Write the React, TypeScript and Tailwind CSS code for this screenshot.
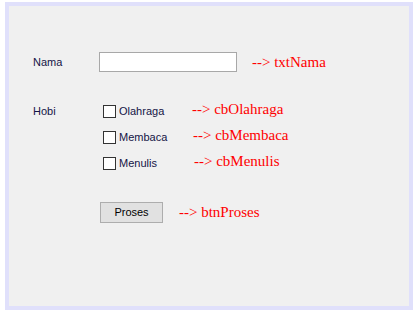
const ui = "font-['Liberation_Sans',Arial,sans-serif] text-[11px] text-[#141446]";
const note = "font-['Liberation_Serif','Times_New_Roman',serif] text-[15px] leading-none text-[#ff0000] whitespace-nowrap";

const hobbies = [
  { label: "Olahraga", name: "cbOlahraga", w: "w-[73px]" },
  { label: "Membaca", name: "cbMembaca", w: "w-[74px]" },
  { label: "Menulis", name: "cbMenulis", w: "w-[75px]" },
];

export default function App() {
  return (
    <div className="w-[417px] h-[314px] bg-white pt-[2px] pl-[5px]">
      <div className="w-[408px] h-[308px] border-4 border-[#e0e0fb] bg-[#f0f0f0] pl-[24px] pt-[46px]">
        {/* Nama */}
        <div className="flex items-center h-[20px]">
          <span className={`${ui} w-[66px]`}>Nama</span>
          <div className="w-[138px] h-[20px] bg-white border border-[#a8a8a8]" />
          <span className={`${note} ml-[15px]`}>--&gt; txtNama</span>
        </div>

        {/* Hobi */}
        <div className="flex mt-[33px]">
          <span className={`${ui} w-[66px] leading-[13px]`}>Hobi</span>
          <div className="flex flex-col gap-[13px] pl-[4px]">
            {hobbies.map((h) => (
              <div key={h.name} className="flex items-center h-[13px]">
                <div className="w-[13px] h-[13px] bg-white border border-[#333333]" />
                <span className={`${ui} ${h.w} ml-[3px] leading-[13px]`}>{h.label}</span>
                <span className={`${note} mb-[4px]`}>--&gt; {h.name}</span>
              </div>
            ))}
          </div>
        </div>

        {/* Proses */}
        <div className="flex items-center mt-[32px] pl-[67px]">
          <button className={`${ui} w-[63px] h-[21px] bg-[#e1e1e1] border border-[#adadad] text-black`}>
            Proses
          </button>
          <span className={`${note} ml-[16px]`}>--&gt; btnProses</span>
        </div>
      </div>
    </div>
  );
}
